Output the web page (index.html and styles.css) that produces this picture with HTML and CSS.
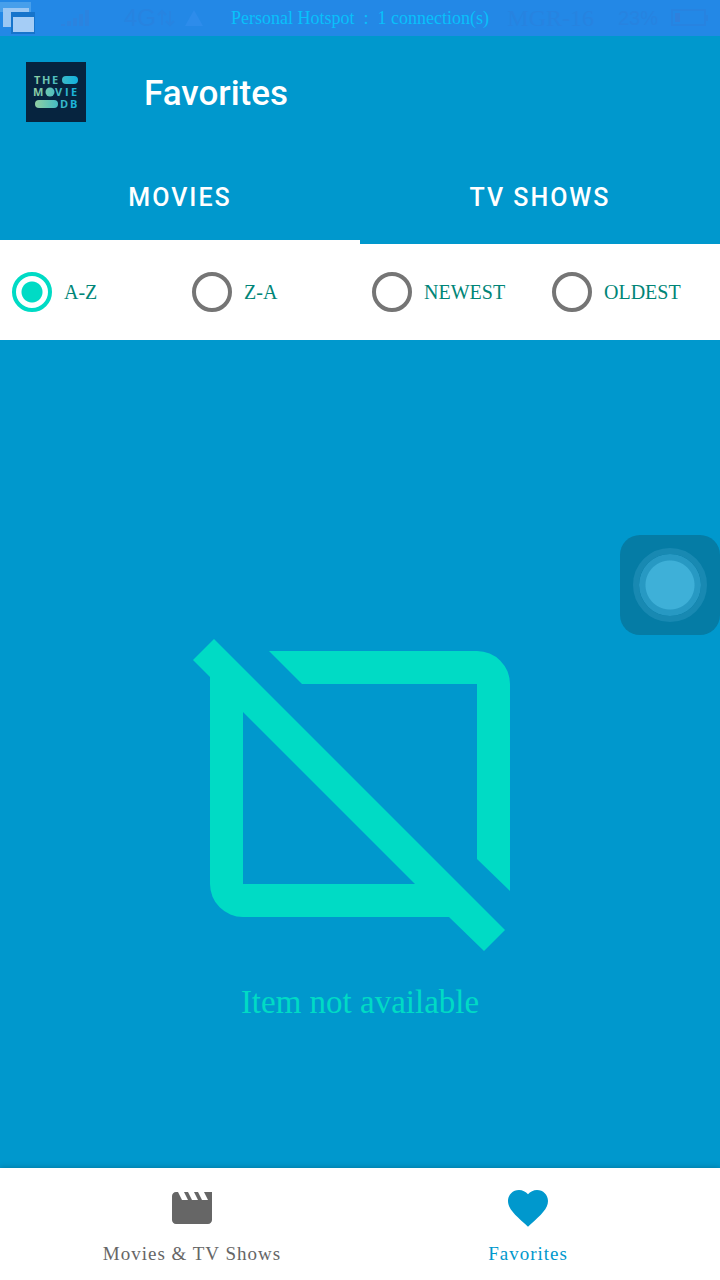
FILE: index.html
```html
<!DOCTYPE html>
<html lang="en">
<head>
<meta charset="utf-8">
<meta name="viewport" content="width=device-width, initial-scale=1">
<title>Favorites</title>
<link rel="stylesheet" href="styles.css">
</head>
<body>
<div class="status">
  <div class="status-side">
    <svg class="windows" width="36" height="36" viewBox="0 0 36 36" aria-hidden="true">
      <path fill="#479feb" d="M0 2h31v10H0z"/>
      <path fill="#9ac7f4" d="M3 8h26v19H3z"/>
      <path fill="#1674cb" d="M11 12h24v22H11z"/>
      <path fill="#a5cdf6" d="M13 17h21v15H13z"/>
    </svg>
    <svg width="30" height="20" viewBox="0 0 30 20" aria-hidden="true">
      <path fill="#2b83df" d="M1 16h4v2H1zM7 13h4v5H7zM13 10h4v8h-4zM19 6h4v12h-4zM25 2h4v16h-4z"/>
    </svg>
    <span class="network">4G</span>
    <svg width="54" height="20" viewBox="0 0 54 20" aria-hidden="true">
      <path fill="none" stroke="#2784e1" stroke-width="2" d="M6 3v14M2 7l4-4 4 4M14 3v14M10 13l4 4 4-4"/>
      <path fill="#2d8ceb" d="M38 2l9 16H29z"/>
    </svg>
  </div>
  <span class="hotspot">Personal Hotspot&nbsp; :&nbsp; 1 connection(s)</span>
  <div class="status-side status-end">
    <span class="carrier">MGR-16</span>
    <span class="battery">23%</span>
    <svg width="40" height="20" viewBox="0 0 40 20" aria-hidden="true">
      <path fill="none" stroke="#2783e0" stroke-width="2" d="M2 2h33v15H2zM37 7v6"/>
      <path fill="#2f80dc" d="M5 5h5v9H5z"/>
    </svg>
  </div>
</div>

<header class="header">
  <div class="toolbar">
    <svg class="logo" width="60" height="60" viewBox="0 0 60 60" role="img" aria-label="The Movie DB">
      <defs>
        <linearGradient id="brand" gradientUnits="userSpaceOnUse" x1="8" y1="0" x2="52" y2="0">
          <stop offset="0" stop-color="#94cfa1"/>
          <stop offset=".5" stop-color="#4bbec0"/>
          <stop offset="1" stop-color="#10b1df"/>
        </linearGradient>
      </defs>
      <path fill="#06243f" d="M0 0h60v60H0z"/>
      <g class="logo-text" fill="url(#brand)">
        <text x="8" y="22">T</text><text x="16" y="22">H</text><text x="26" y="22">E</text>
        <text x="7" y="34">M</text><text x="29" y="34">V</text><text x="39" y="34">I</text><text x="45" y="34">E</text>
        <text x="34" y="46">D</text><text x="44" y="46">B</text>
        <rect x="36" y="14" width="16" height="8" rx="4"/>
        <circle cx="24" cy="30" r="4.500"/>
        <rect x="9" y="38" width="23" height="8" rx="4"/>
      </g>
    </svg>
    <h1 class="title">Favorites</h1>
  </div>
  <div class="tabs" role="tablist">
    <button class="tab tab-active" type="button" role="tab" aria-selected="true">MOVIES</button>
    <button class="tab" type="button" role="tab" aria-selected="false">TV SHOWS</button>
  </div>
</header>

<form class="filters">
  <label class="filter"><input class="radio" type="radio" name="sort" checked>A-Z</label>
  <label class="filter"><input class="radio" type="radio" name="sort">Z-A</label>
  <label class="filter"><input class="radio" type="radio" name="sort">NEWEST</label>
  <label class="filter"><input class="radio" type="radio" name="sort">OLDEST</label>
</form>

<main class="empty">
  <svg width="400" height="400" viewBox="0 0 400 400" fill="#00dbc5" aria-hidden="true">
    <path fill-rule="evenodd" d="M54 55L33 76l17 17v207a33 33 0 0 0 33 33h206l35 34 21-21zM83 128v172h172z"/>
    <path d="M109 67h208a33 33 0 0 1 33 33v207l-33-32V100H142z"/>
  </svg>
  <p class="empty-text">Item not available</p>
</main>

<nav class="nav">
  <a class="nav-item" href="#movies">
    <svg width="48" height="48" viewBox="0 0 24 24" fill="currentColor" aria-hidden="true">
      <path d="M18 4l2 4h-3l-2-4h-2l2 4h-3l-2-4H8l2 4H7L5 4H4c-1.100 0-1.990.9-1.990 2L2 18c0 1.100.9 2 2 2h16c1.100 0 2-.9 2-2V4z"/>
    </svg>
    <span>Movies &amp; TV Shows</span>
  </a>
  <a class="nav-item nav-active" href="#favorites" aria-current="page">
    <svg width="48" height="48" viewBox="0 0 24 24" fill="currentColor" aria-hidden="true">
      <path d="M12 21.350l-1.450-1.320C5.400 15.360 2 12.280 2 8.500 2 5.420 4.420 3 7.500 3c1.740 0 3.410.810 4.500 2.090C13.090 3.810 14.760 3 16.500 3 19.580 3 22 5.420 22 8.500c0 3.780-3.400 6.860-8.550 11.540z"/>
    </svg>
    <span>Favorites</span>
  </a>
</nav>

<button class="assist" type="button" aria-label="Assistive menu"><span class="assist-dot"></span></button>
</body>
</html>
```
FILE: styles.css
```css
* {
  box-sizing: border-box;
}

body {
  display: flex;
  flex-direction: column;
  min-height: 100vh;
  margin: 0;
  background: #0098cd;
  color: #fff;
  font-family: "Liberation Serif", serif;
}

button {
  padding: 0;
  border: 0;
  background: none;
  color: inherit;
}

svg {
  flex: none;
}

.status {
  display: grid;
  grid-template-columns: 1fr auto 1fr;
  align-items: center;
  height: 36px;
  background: #2388e6;
  white-space: nowrap;
}

.status-side {
  display: flex;
  align-items: center;
  gap: 24px;
  min-width: 0;
}

.status-side .network {
  margin-left: 10px;
}

.network + svg {
  margin-left: -24px;
}

.network,
.battery {
  color: #2783e0;
  font: 24px "Liberation Sans", sans-serif;
}

.status-end {
  justify-content: flex-end;
  gap: 12px;
  padding-right: 10px;
}

.carrier {
  margin-right: 12px;
  color: #2783e0;
  font-size: 24px;
}

.battery {
  font-size: 20px;
}

.hotspot {
  color: #08c1fb;
  font-size: 18px;
}

.toolbar {
  display: flex;
  align-items: center;
  gap: 58px;
  height: 112px;
  padding: 0 26px;
}

.logo-text {
  font: bold 11px "Open Sans", sans-serif;
}

.title {
  margin: 0;
  padding-top: 4px;
  font: 500 35px/48px Roboto, sans-serif;
}

.tabs {
  display: grid;
  grid-template-columns: 1fr 1fr;
  height: 96px;
}

.tab {
  padding-top: 7px;
  border-bottom: 4px solid transparent;
  font: 500 25px Roboto, sans-serif;
  letter-spacing: 2px;
}

.tab-active {
  border-bottom-color: #fff;
}

.filters {
  display: grid;
  grid-template-columns: repeat(4, 1fr);
  height: 96px;
  background: #fff;
}

.filter {
  display: flex;
  align-items: center;
  gap: 12px;
  padding-left: 12px;
  color: #008577;
  font-size: 20px;
}

.radio {
  flex: none;
  width: 40px;
  height: 40px;
  margin: 0;
  border: 4px solid #757575;
  border-radius: 50%;
  appearance: none;
}

.radio:checked {
  border-color: #00dbc5;
  background: radial-gradient(circle, #00dbc5 10px, transparent 11px);
}

.empty {
  display: flex;
  flex: 1;
  flex-direction: column;
  align-items: center;
  padding-top: 244px;
}

.empty-text {
  margin: 0;
  color: #00dbc5;
  font-size: 33px;
  line-height: 36px;
}

.nav {
  display: grid;
  grid-template-columns: 1fr 1fr;
  padding: 16px 24px 12px;
  background: #fff;
  box-shadow: 0 0 6px rgba(0, 0, 0, 0.25);
}

.nav-item {
  display: flex;
  flex-direction: column;
  align-items: center;
  gap: 8px;
  color: #666;
  font-size: 19px;
  line-height: 28px;
  letter-spacing: 1px;
  text-decoration: none;
}

.nav-active {
  color: #0098cd;
}

.assist {
  position: absolute;
  top: 535px;
  right: 0;
  display: grid;
  place-items: center;
  width: 100px;
  height: 100px;
  border-radius: 20px;
  background: #057ca5;
}

.assist-dot {
  width: 74px;
  height: 74px;
  border: 6px solid #1889b2;
  border-radius: 50%;
  background: radial-gradient(circle, #3eb0d8 24px, #2799c3 25px);
  background-clip: padding-box;
}
```
